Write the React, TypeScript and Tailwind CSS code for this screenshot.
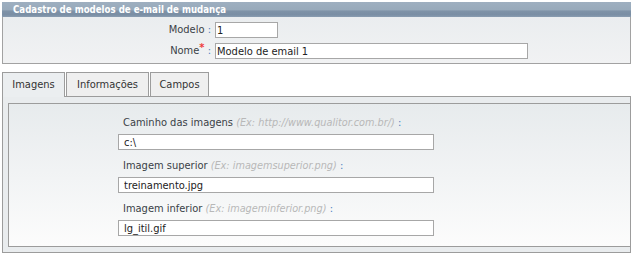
const font = "font-['DejaVu_Sans_Condensed','DejaVu_Sans',sans-serif]";

const topInput =
  "h-[16px] border border-[#a7a7a7] bg-white px-[1px] text-[11px] leading-[14px] text-[#222] outline-none";

const fieldInput =
  "h-[16px] w-[316px] border border-[#a7a7a7] bg-white px-[5px] text-[11px] leading-[14px] text-[#222] outline-none";

function Colon() {
  return <span className="text-[#4f7fc0]"> :</span>;
}

function TopRow({
  label,
  required,
  value,
  width,
}: {
  label: string;
  required?: boolean;
  value: string;
  width: string;
}) {
  return (
    <div className="flex h-[16px] items-center">
      <div className="w-[212px] pr-[4px] text-right text-[11px] leading-[14px] text-[#3a3f47]">
        {label}
        {required && (
          <span className="relative -top-[3px] text-[11px] font-bold text-[#ee3b3b]">*</span>
        )}
        <Colon />
      </div>
      <input readOnly value={value} className={`${topInput} ${width}`} />
    </div>
  );
}

function Field({ label, hint, value }: { label: string; hint: string; value: string }) {
  return (
    <div className="flex flex-col">
      <div className="h-[14px] pl-[5px] text-[11px] leading-[15px] text-[#3a3f47]">
        {label} <span className="text-[10.8px] italic text-[#b8b8b8]">{hint}</span>
        <Colon />
      </div>
      <input readOnly value={value} className={`${fieldInput} mt-[5px]`} />
    </div>
  );
}

export default function App() {
  return (
    <div className={`${font} h-[255px] w-[633px] bg-white pt-[2px]`}>
      <div className="ml-[2px] w-[629px]">
        <div className="h-[15px] bg-[linear-gradient(to_bottom,#9eafc0_0%,#98aabb_50%,#7e92a7_62%,#7a8ea4_85%,#8a9db1_100%)] pl-[11px] text-[9.6px] font-bold leading-[15px] text-white">
          Cadastro de modelos de e-mail de mudança
        </div>
        <div className="flex flex-col gap-[5px] border-x border-b border-[#a2a2a2] bg-[linear-gradient(to_bottom,#eaedef,#f1f2f3)] pt-[5px] pb-[4px]">
          <TopRow label="Modelo" value="1" width="w-[63px]" />
          <TopRow label="Nome" required value="Modelo de email 1" width="w-[313px]" />
        </div>

        <div className="mt-[8px] flex h-[24px] items-end">
          <div className="relative z-10 -mb-px flex h-[25px] w-[63px] items-start justify-center border-x border-t border-[#9c9c9c] bg-[#ebeef0] pt-[5px] text-[11px] leading-[14px] text-[#333]">
            Imagens
          </div>
          <div className="ml-[1px] flex h-[24px] w-[83px] items-start justify-center border-x border-t border-[#9c9c9c] bg-[#efefef] pt-[5px] text-[11px] leading-[14px] text-[#333]">
            Informações
          </div>
          <div className="ml-[1px] flex h-[24px] w-[59px] items-start justify-center border-x border-t border-[#9c9c9c] bg-[#efefef] pt-[5px] text-[11px] leading-[14px] text-[#333]">
            Campos
          </div>
        </div>
        <div className="border border-[#9c9c9c] bg-[#e9ecee] pt-[6px] pb-[5px] pl-[5px]">
          <div className="flex h-[144px] flex-col gap-[8px] border-y border-l border-[#9c9c9c] bg-[linear-gradient(to_bottom,#e7ebed,#fcfcfc)] pt-[11px] pl-[109px]">
            <Field
              label="Caminho das imagens"
              hint="(Ex: http://www.qualitor.com.br/)"
              value="c:\"
            />
            <Field label="Imagem superior" hint="(Ex: imagemsuperior.png)" value="treinamento.jpg" />
            <Field label="Imagem inferior" hint="(Ex: imageminferior.png)" value="lg_itil.gif" />
          </div>
        </div>
      </div>
    </div>
  );
}
